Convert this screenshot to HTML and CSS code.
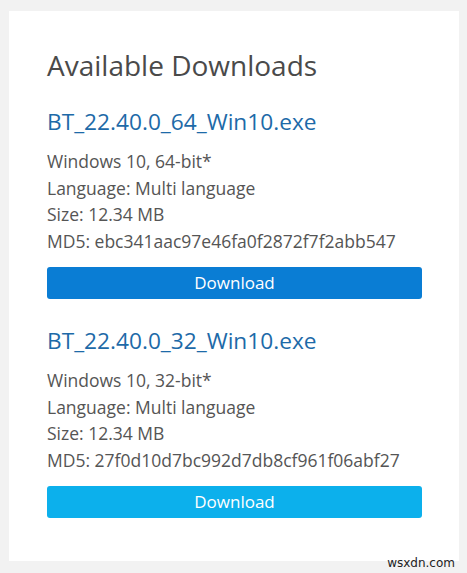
FILE: index.html
```html
<!DOCTYPE html>
<html lang="en">
<head>
<meta charset="utf-8">
<title>Available Downloads</title>
<link rel="stylesheet" href="styles.css">
</head>
<body>
<main class="card">
  <h1 class="title">Available Downloads</h1>
  <section class="item">
    <a class="file" href="#">BT_22.40.0_64_Win10.exe</a>
    <ul class="meta">
      <li>Windows 10, 64-bit*</li>
      <li>Language: Multi language</li>
      <li>Size: 12.34 MB</li>
      <li>MD5: ebc341aac97e46fa0f2872f7f2abb547</li>
    </ul>
    <button class="btn btn-primary" type="button">Download</button>
  </section>
  <section class="item">
    <a class="file" href="#">BT_22.40.0_32_Win10.exe</a>
    <ul class="meta">
      <li>Windows 10, 32-bit*</li>
      <li>Language: Multi language</li>
      <li>Size: 12.34 MB</li>
      <li>MD5: 27f0d10d7bc992d7db8cf961f06abf27</li>
    </ul>
    <button class="btn btn-light" type="button">Download</button>
  </section>
</main>
<div class="watermark">wsxdn.com</div>
</body>
</html>
```
FILE: styles.css
```css
html, body {
  margin: 0;
  padding: 0;
}
body {
  background: #f2f2f2;
  font-family: "Open Sans", "Noto Sans", sans-serif;
  color: #555555;
  position: relative;
  width: 467px;
  height: 573px;
  overflow: hidden;
}
.card {
  box-sizing: border-box;
  margin: 11px 8px 12px 9px;
  width: 450px;
  height: 550px;
  background: #ffffff;
  padding: 34px 37px 0 38px;
  display: flex;
  flex-direction: column;
}
.title {
  margin: 0;
  font-size: 28px;
  line-height: 40px;
  font-weight: 400;
  color: #4a4a4a;
}
.item {
  display: flex;
  flex-direction: column;
}
.item + .item {
  margin-top: 27px;
}
.title + .item {
  margin-top: 22px;
}
.file {
  font-size: 22.7px;
  line-height: 30px;
  color: #1d6aa8;
  text-decoration: none;
}
.meta {
  list-style: none;
  margin: 11px 0 0;
  padding: 0;
  font-size: 17.5px;
  line-height: 26.7px;
}
.btn {
  margin-top: 12px;
  height: 32px;
  border: 0;
  border-radius: 3px;
  color: #ffffff;
  font-family: "Open Sans", "Noto Sans", sans-serif;
  font-size: 17px;
  line-height: 32px;
  padding: 0;
  text-align: center;
}
.btn-primary {
  background: #0a7dd4;
}
.btn-light {
  background: #0cb0ec;
}
.watermark {
  position: absolute;
  right: 12px;
  bottom: 3px;
  font-family: "DejaVu Sans", sans-serif;
  font-size: 12px;
  color: #222222;
}
```
